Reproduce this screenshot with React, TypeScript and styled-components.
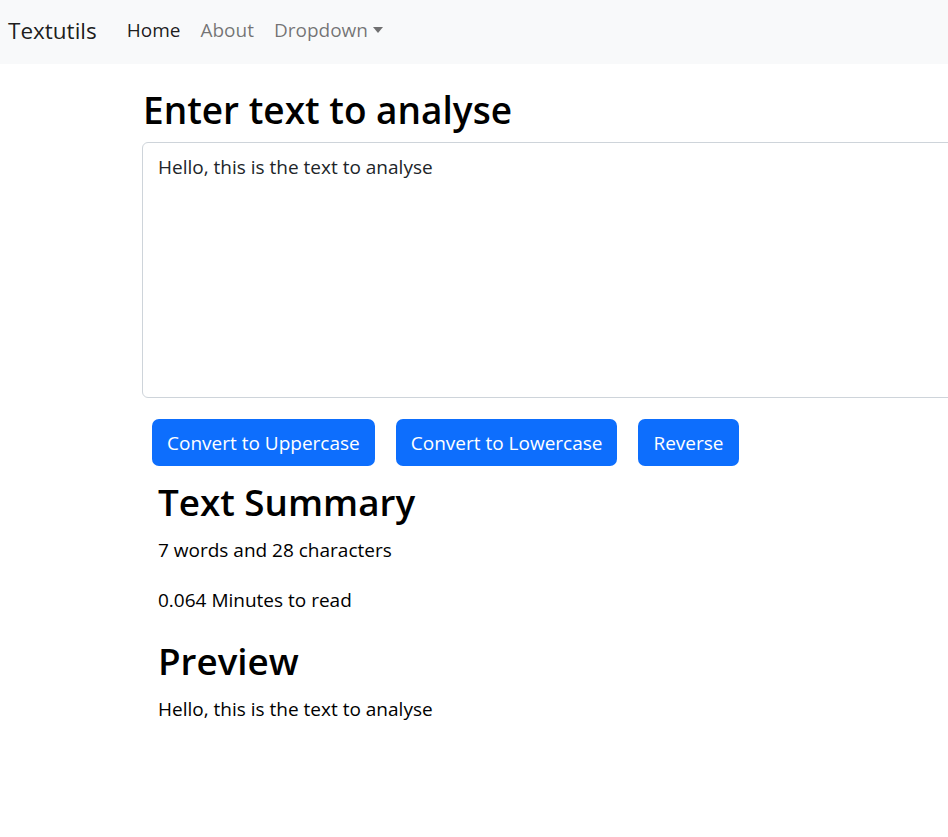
import styled, {createGlobalStyle} from "styled-components"

const GlobalStyle = createGlobalStyle`
  html, body {
    margin: 0;
    padding: 0;
    background: #fff;
    overflow-x: hidden;
  }
  body {
    font-family: "Open Sans", "Noto Sans", sans-serif;
    color: #212529;
  }
`

const Navbar = styled.nav`
  display: flex;
  align-items: center;
  box-sizing: border-box;
  height: 64px;
  padding: 0 0 4px 8px;
  background: #f8f9fa;
`

const Brand = styled.span`
  font-size: 22.5px;
  color: rgba(0, 0, 0, 0.9);
  margin-right: 20px;
`

const NavLinks = styled.ul`
  display: flex;
  list-style: none;
  margin: 0;
  padding: 0;
`

const NavLink = styled.li<{$active?: boolean}>`
  padding: 0 10px;
  font-size: 19px;
  color: ${({$active}) => $active ? "rgba(0, 0, 0, 0.9)" : "rgba(0, 0, 0, 0.55)"};
  display: flex;
  align-items: center;
`

const Caret = styled.span`
  display: inline-block;
  margin-left: 5px;
  border-top: 6px solid currentColor;
  border-left: 5.5px solid transparent;
  border-right: 5.5px solid transparent;
`

const Main = styled.main`
  padding-left: 142px;
`

const Title = styled.h1`
  margin: 22px 0 8px 1px;
  font-size: 37px;
  line-height: 48px;
  font-weight: 600;
  color: #000;
`

const TextArea = styled.textarea`
  display: block;
  box-sizing: border-box;
  width: 880px;
  height: 256px;
  margin: 0;
  padding: 9px 15px;
  border: 1px solid #ced4da;
  border-radius: 6px;
  font-family: inherit;
  font-size: 19px;
  line-height: 30px;
  color: #212529;
  resize: none;
  outline: none;
`

const ButtonRow = styled.div`
  display: flex;
  gap: 21px;
  margin: 21px 0 0 10px;
`

const Button = styled.button`
  height: 47px;
  padding: 0 15px;
  border: none;
  border-radius: 7px;
  background: #0d6efd;
  color: #fff;
  font-family: inherit;
  font-size: 19px;
`

const Summary = styled.section`
  padding-left: 16px;
`

const Heading = styled.h2<{$top: number}>`
  margin: ${({$top}) => `${$top}px`} 0 0;
  font-size: 36.8px;
  line-height: 44px;
  font-weight: 600;
  color: #000;
`

const Para = styled.p`
  margin: 11px 0 20px;
  font-size: 19px;
  line-height: 30px;
  color: #000;
`

const text = "Hello, this is the text to analyse"

export default function App() {
  return (
    <>
      <GlobalStyle />
      <Navbar>
        <Brand>Textutils</Brand>
        <NavLinks>
          <NavLink $active>Home</NavLink>
          <NavLink>About</NavLink>
          <NavLink>Dropdown<Caret /></NavLink>
        </NavLinks>
      </Navbar>
      <Main>
        <Title>Enter text to analyse</Title>
        <TextArea defaultValue={text} />
        <ButtonRow>
          <Button>Convert to Uppercase</Button>
          <Button>Convert to Lowercase</Button>
          <Button>Reverse</Button>
        </ButtonRow>
        <Summary>
          <Heading $top={14}>Text Summary</Heading>
          <Para>7 words and 28 characters</Para>
          <Para>0.064 Minutes to read</Para>
          <Heading $top={24}>Preview</Heading>
          <Para>{text}</Para>
        </Summary>
      </Main>
    </>
  )
}
